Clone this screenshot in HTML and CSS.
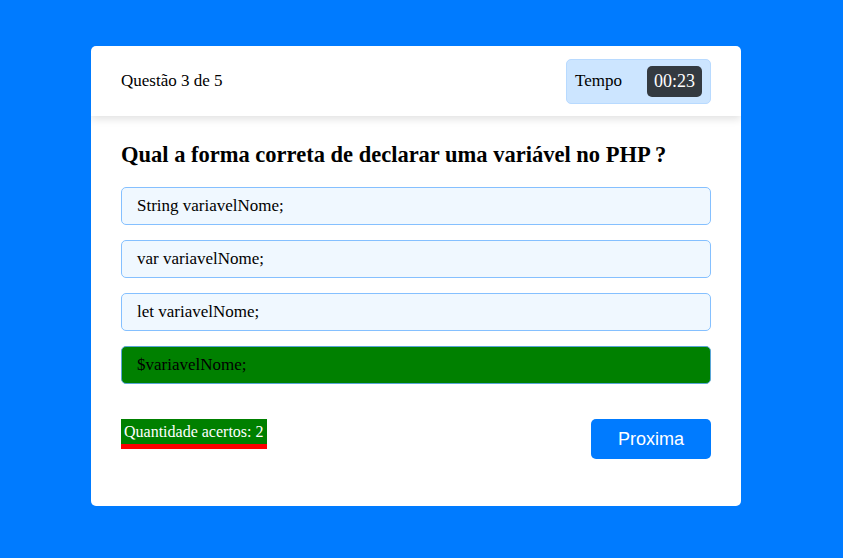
FILE: index.html
```html
<!DOCTYPE html>
<html lang="pt">
<head>
<meta charset="utf-8">
<title>Quiz</title>
<link rel="stylesheet" href="styles.css">
</head>
<body>
<div class="card">
  <header class="card-header">
    <span class="counter">Questão 3 de 5</span>
    <div class="timer">
      <span class="timer-label">Tempo</span>
      <span class="timer-value">00:23</span>
    </div>
  </header>
  <section class="card-body">
    <h2 class="question">Qual a forma correta de declarar uma variável no PHP ?</h2>
    <div class="options">
      <div class="option">String variavelNome;</div>
      <div class="option">var variavelNome;</div>
      <div class="option">let variavelNome;</div>
      <div class="option correct">$variavelNome;</div>
    </div>
    <div class="footer">
      <span class="score">Quantidade acertos: 2</span>
      <button class="next">Proxima</button>
    </div>
  </section>
</div>
</body>
</html>
```

FILE: styles.css
```css
* { box-sizing: border-box; }
html, body { margin: 0; padding: 0; }
body {
  background: #007bff;
  font-family: "Liberation Serif", "Times New Roman", serif;
  font-size: 17px;
  color: #000;
  width: 843px;
  height: 558px;
  overflow: hidden;
  padding: 46px 0 0 91px;
}
.card {
  width: 650px;
  height: 460px;
  background: #fff;
  border-radius: 5px;
  overflow: hidden;
}
.card-header {
  height: 70px;
  padding: 0 30px;
  display: flex;
  align-items: center;
  justify-content: space-between;
  box-shadow: 0 3px 8px rgba(0,0,0,0.12);
  position: relative;
}
.timer {
  width: 145px;
  height: 45px;
  background: #cce5ff;
  border: 1px solid #b8daff;
  border-radius: 5px;
  display: flex;
  align-items: center;
  justify-content: space-between;
  padding: 0 8px 0 8px;
}
.timer-value {
  background: #343a40;
  color: #fff;
  font-size: 18px;
  height: 31px;
  line-height: 31px;
  width: 55px;
  text-align: center;
  border-radius: 5px;
}
.card-body {
  padding: 26px 30px 47px;
}
.question {
  margin: 0 0 20px;
  font-size: 22.5px;
  line-height: 25px;
  font-weight: bold;
}
.options {
  display: flex;
  flex-direction: column;
  gap: 15px;
}
.option {
  height: 38px;
  line-height: 36px;
  padding: 0 15px;
  background: #f0f8ff;
  border: 1px solid #85c0ff;
  border-radius: 5px;
}
.option.correct {
  background: #008000;
  border-color: #5aa6d6;
}
.footer {
  margin-top: 35px;
  display: flex;
  justify-content: space-between;
  align-items: flex-start;
}
.score {
  background: #008000;
  color: #fff;
  font-size: 16px;
  line-height: 25px;
  padding: 0 3px;
  border-bottom: 5px solid #ff0000;
}
.next {
  width: 120px;
  height: 40px;
  background: #007bff;
  color: #fff;
  border: none;
  border-radius: 5px;
  font-family: "Liberation Sans", Arial, sans-serif;
  font-size: 18px;
  padding: 0;
}
```
